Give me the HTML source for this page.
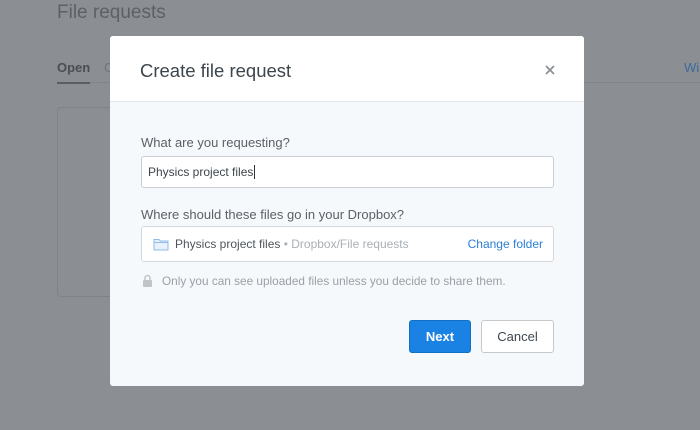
<!DOCTYPE html>
<html><head><style>
body{margin:0;width:700px;height:430px;background:#8b8f94;font-family:"Liberation Sans",sans-serif;position:relative;overflow:hidden}
.a{position:absolute}
</style></head><body>
<div class="a" style="left:57px;top:2px;font-size:19px;color:#5d6166">File requests</div>
<div class="a" style="left:57px;top:60px;font-size:13px;color:#4a4e53;font-weight:bold">Open</div>
<div class="a" style="left:104px;top:60px;font-size:13px;color:#70747a">C</div>
<div class="a" style="left:684px;top:60px;font-size:13px;color:#3d6a99">Wi</div>
<div class="a" style="left:57px;top:82px;width:643px;height:1px;background:#80848a"></div>
<div class="a" style="left:57px;top:82px;width:33px;height:2px;background:#5a5e63"></div>
<div class="a" style="left:57px;top:107px;width:60px;height:188px;border:1px solid #7f8388;border-radius:4px"></div>
<div class="a" style="left:110px;top:36px;width:474px;height:350px;background:#f6f9fc;border-radius:3px;overflow:hidden">
 <div style="height:65px;background:#fff;border-bottom:1px solid #e3e6ea;position:relative">
  <div class="a" style="left:30px;top:24px;font-size:18.5px;color:#3d464d">Create file request</div>
  <svg class="a" style="left:435px;top:29px" width="10" height="10"><path d="M1 1L9 9M9 1L1 9" stroke="#8a9199" stroke-width="1.8"/></svg>
 </div>
 <div class="a" style="left:31px;top:99px;font-size:13px;color:#5b6168">What are you requesting?</div>
 <div class="a" style="left:31px;top:120px;width:411px;height:30px;background:#fff;border:1px solid #c9ced4;border-radius:3px;font-size:12px;color:#3d464d;line-height:30px;text-indent:6px">Physics project files<span style="border-left:1px solid #333;margin-left:1px"></span></div>
 <div class="a" style="left:31px;top:171px;font-size:13px;color:#5b6168">Where should these files go in your Dropbox?</div>
 <div class="a" style="left:31px;top:190px;width:411px;height:34px;background:#fff;border:1px solid #d4d8dd;border-radius:3px;font-size:12px;line-height:34px">
  <svg class="a" style="left:11px;top:10px" width="16" height="14"><path d="M1 2.5h5l1.5 1.5h7.5v9h-14z" fill="#e9f2fc" stroke="#8fbbe8"/><path d="M1 5.5h14" stroke="#8fbbe8"/></svg>
  <span class="a" style="left:33px;color:#4d555c">Physics project files <span style="color:#aab0b6">• Dropbox/File requests</span></span>
  <span class="a" style="right:10px;color:#2a7fd4">Change folder</span>
 </div>
 <svg class="a" style="left:32px;top:238px" width="11" height="13"><path d="M3 6V4a2.5 2.5 0 015 0v2" fill="none" stroke="#bfc4c9" stroke-width="1.5"/><rect x="1" y="6" width="9" height="7" rx="1" fill="#bfc4c9"/></svg>
 <div class="a" style="left:52px;top:238px;font-size:11.8px;color:#9aa0a6">Only you can see uploaded files unless you decide to share them.</div>
 <div class="a" style="left:299px;top:284px;width:60px;height:31px;background:#1a82e2;border:1px solid #1270c4;border-radius:3px;color:#fff;font-size:13px;font-weight:bold;text-align:center;line-height:31px">Next</div>
 <div class="a" style="left:371px;top:284px;width:71px;height:31px;background:#fff;border:1px solid #c4c9ce;border-radius:3px;color:#3d464d;font-size:13px;text-align:center;line-height:31px">Cancel</div>
</div>
</body></html>
